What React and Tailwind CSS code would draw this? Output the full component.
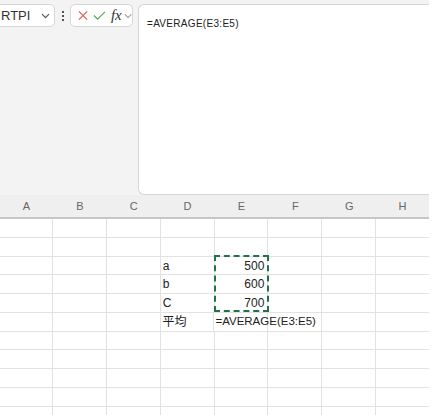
import React from "react";

const widths = [53, 54, 54, 54, 54, 54, 54, 53];
const cols = ["A", "B", "C", "D", "E", "F", "G", "H"];
const heights = [19, 19, 18, 19, 19, 19, 18, 19, 19, 19, 19];

function Chevron({ className }) {
  return (
    <svg className={className} width="9" height="6" viewBox="0 0 9 6" fill="none">
      <path d="M1 1.2 4.5 4.7 8 1.2" stroke="currentColor" strokeWidth="1.2" />
    </svg>
  );
}

export default function App() {
  const data = {
    2: { d: "a", e: "500" },
    3: { d: "b", e: "600" },
    4: { d: "C", e: "700" },
    5: { d: "平均", f: "=AVERAGE(E3:E5)" },
  };
  return (
    <div
      className="w-[429px] h-[415px] overflow-hidden bg-white text-[#222]"
      style={{ fontFamily: '"Liberation Sans", "Noto Sans CJK JP", sans-serif' }}
    >
      {/* toolbar / formula bar */}
      <div className="h-[195px] bg-[#f3f3f3] pt-[4px] flex items-start">
        <div className="w-[56px] h-[23px] -ml-[1px] bg-white border border-[#d6d6d6] rounded-r-[5px] flex items-center pl-[1px] pr-[4px]">
          <span className="text-[13px] text-[#333] leading-none">RTPI</span>
          <Chevron className="ml-auto text-[#555]" />
        </div>
        <div className="w-[15px] h-[23px] flex flex-col items-center justify-center gap-[2px]">
          <div className="w-[2px] h-[2px] bg-[#555]" />
          <div className="w-[2px] h-[2px] bg-[#555]" />
          <div className="w-[2px] h-[2px] bg-[#555]" />
        </div>
        <div className="w-[63px] h-[23px] bg-white border border-[#d6d6d6] rounded-[5px] flex items-center pl-[7px]">
          <svg width="11" height="11" viewBox="0 0 11 11" fill="none">
            <path d="M1 1 10 10M10 1 1 10" stroke="#e2564f" strokeWidth="1.2" />
          </svg>
          <svg className="ml-[5px]" width="14" height="11" viewBox="0 0 14 11" fill="none">
            <path d="M1 5.5 5 9.5 13 1.5" stroke="#4caf50" strokeWidth="1.2" />
          </svg>
          <span
            className="ml-[5px] text-[15px] italic leading-none text-[#333]"
            style={{ fontFamily: '"Liberation Serif", serif' }}
          >
            fx
          </span>
          <Chevron className="ml-[2px] text-[#999]" />
        </div>
        <div className="ml-[5px] flex-1 h-[191px] bg-white border-l border-t border-b border-[#d6d6d6] rounded-l-[6px] pl-[8px] pt-[5px]">
          <span className="text-[10px] tracking-[0.3px] text-[#222]">=AVERAGE(E3:E5)</span>
        </div>
      </div>

      {/* column header */}
      <div className="h-[24px] bg-[#efefef] border-b-2 border-[#c6c6c6] flex">
        {cols.map((c, i) => (
          <div
            key={c}
            className="flex items-center justify-center text-[11px] text-[#666]"
            style={{ width: widths[i] }}
          >
            {c}
          </div>
        ))}
      </div>

      {/* grid */}
      <div className="relative">
        {heights.map((h, r) => (
          <div key={r} className="flex border-b border-[#e2e2e2]" style={{ height: h }}>
            {widths.map((w, i) => {
              const row = data[r] || {};
              let content = null;
              if (i === 3 && row.d) content = <span className="pl-[2px] text-[12px]">{row.d}</span>;
              if (i === 4 && row.e)
                content = <span className="ml-auto pr-[3px] text-[12px]">{row.e}</span>;
              if (i === 4 && row.f)
                content = <span className="pl-[1px] text-[11.5px] whitespace-nowrap">{row.f}</span>;
              return (
                <div
                  key={i}
                  className={`flex items-center ${i < 7 ? "border-r border-[#e2e2e2]" : ""} ${i === 4 && row.f ? "overflow-visible" : "overflow-hidden"}`}
                  style={{ width: w }}
                >
                  {content}
                </div>
              );
            })}
          </div>
        ))}
        <div className="absolute left-[214px] top-[36px] w-[55px] h-[57px] border-2 border-dashed border-[#217346]" />
      </div>
    </div>
  );
}
